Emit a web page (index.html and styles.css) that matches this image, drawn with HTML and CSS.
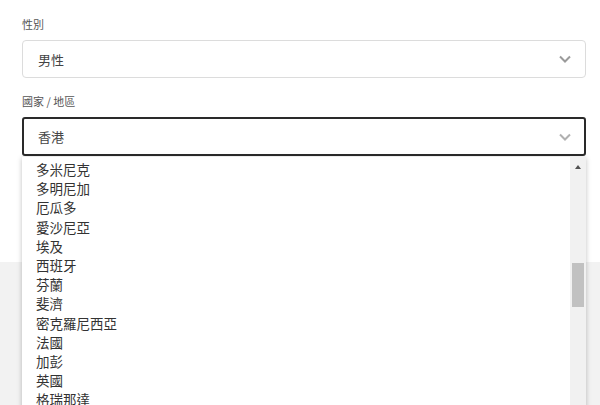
FILE: index.html
```html
<!DOCTYPE html>
<html lang="zh-Hant">

<head>
    <meta charset="UTF-8">
    <meta name="viewport" content="width=device-width, initial-scale=1.0">
    <title>個人資料</title>
    <link rel="stylesheet" href="styles.css">
</head>

<body>
    <div class="form">
        <div class="field">
            <label class="field-label">性別</label>
            <div class="select">
                <span>男性</span>
                <svg class="chevron" width="12" height="8" viewBox="0 0 12 8"><path d="M1 1.5 6 6.5 11 1.5" fill="none" stroke="#9a9a9a" stroke-width="2"/></svg>
            </div>
        </div>

        <div class="field">
            <label class="field-label">國家 / 地區</label>
            <div class="select select-open">
                <span>香港</span>
                <svg class="chevron" width="12" height="8" viewBox="0 0 12 8"><path d="M1 1.5 6 6.5 11 1.5" fill="none" stroke="#b0b0b0" stroke-width="2"/></svg>

                <div class="dropdown">
                    <ul class="options">
                        <li>多米尼克</li>
                        <li>多明尼加</li>
                        <li>厄瓜多</li>
                        <li>愛沙尼亞</li>
                        <li>埃及</li>
                        <li>西班牙</li>
                        <li>芬蘭</li>
                        <li>斐濟</li>
                        <li>密克羅尼西亞</li>
                        <li>法國</li>
                        <li>加彭</li>
                        <li>英國</li>
                        <li>格瑞那達</li>
                    </ul>
                    <div class="scrollbar">
                        <div class="scroll-arrow"></div>
                        <div class="scroll-thumb"></div>
                    </div>
                </div>
            </div>
        </div>
    </div>

    <div class="footer"></div>
</body>

</html>
```

FILE: styles.css
```css
* {
    box-sizing: border-box;
}

body {
    margin: 0;
    background: #fff;
    font-family: "Noto Sans CJK TC", "Noto Sans", sans-serif;
    color: #333;
    overflow: hidden;
}

.form {
    padding: 15px 14px 0 22px;
    height: 262px;
}

.field {
    margin-bottom: 14px;
}

.field-label {
    display: block;
    font-size: 11px;
    color: #555;
    line-height: 18px;
    margin-bottom: 7px;
}

.select {
    position: relative;
    display: flex;
    align-items: center;
    justify-content: space-between;
    height: 38px;
    padding: 0 14px 0 15px;
    border: 1px solid #dcdcdc;
    border-radius: 4px;
    font-size: 13px;
    color: #444;
}

.select-open {
    border: 2px solid #2a2a2a;
    height: 39px;
    padding-left: 14px;
    padding-right: 13px;
    border-radius: 3px;
}

.chevron {
    display: block;
}

.dropdown {
    position: absolute;
    top: 38px;
    left: -2px;
    right: -2px;
    height: 260px;
    background: #fff;
    box-shadow: 0 1px 5px rgba(0, 0, 0, 0.25);
    overflow: hidden;
    z-index: 5;
}

.options {
    list-style: none;
    margin: 0;
    padding: 3px 0 0 14px;
}

.options li {
    font-size: 13.5px;
    line-height: 19.2px;
    color: #333;
}

.scrollbar {
    position: absolute;
    top: 0;
    right: 0;
    bottom: 0;
    width: 16px;
    background: #f1f1f1;
}

.scroll-arrow {
    position: absolute;
    top: 8px;
    left: 5px;
    width: 0;
    height: 0;
    border-left: 3px solid transparent;
    border-right: 3px solid transparent;
    border-bottom: 4px solid #505050;
}

.scroll-thumb {
    position: absolute;
    top: 106px;
    left: 2px;
    width: 12px;
    height: 44px;
    background: #c1c1c1;
}

.footer {
    height: 143px;
    background: #f2f2f2;
}
```
